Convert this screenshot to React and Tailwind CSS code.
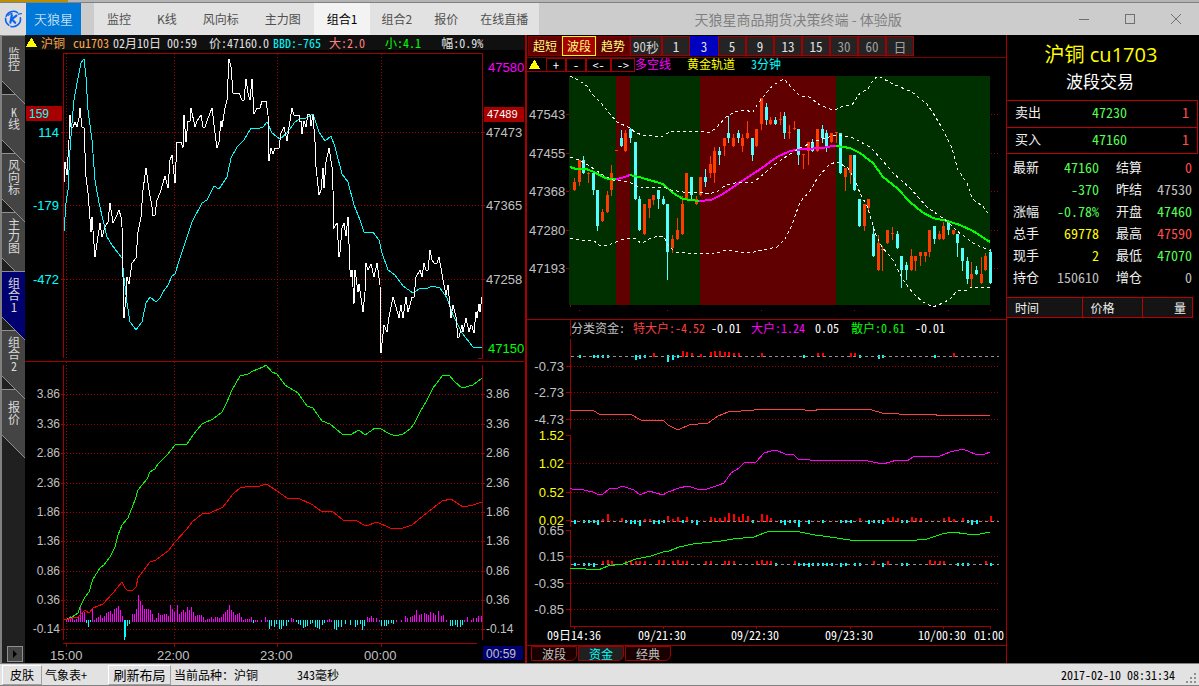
import React, { useState } from "react";
import clsx from "clsx";

const SONG = "font-['Noto_Sans_Mono_CJK_SC','Noto_Sans_CJK_SC',monospace]";
const RED = "#a00000";
const UP = "#ff3c00";
const DOWN = "#54ffff";

const MENU = ["监控", "K线", "风向标", "主力图", "组合1", "组合2", "报价", "在线直播"];

const SIDE_TABS = [
  { name: "监控", z: "z-[7]" },
  { name: "K线", z: "z-[6]" },
  { name: "风向标", z: "z-[5]" },
  { name: "主力图", z: "z-[4]" },
  { name: "组合1", z: "z-[8]" },
  { name: "组合2", z: "z-[2]" },
  { name: "报价", z: "z-[1]" },
];

const MODES = ["超短", "波段", "趋势"];
const PERIODS = ["1", "3", "5", "9", "13", "15", "30", "60", "日"];
const FUND_TABS = ["波段", "资金", "经典"];

// [label, value, colour, label, value, colour]
const QUOTE = [
  ["最新", "47160", "text-[#54ff54]", "结算", "0", "text-[#ff4c4c]"],
  ["", "-370", "text-[#54ff54]", "昨结", "47530", "text-[#c0c0c0]"],
  ["涨幅", "-0.78%", "text-[#54ff54]", "开盘", "47460", "text-[#54ff54]"],
  ["总手", "69778", "text-[#ffff00]", "最高", "47590", "text-[#ff4c4c]"],
  ["现手", "2", "text-[#ffff00]", "最低", "47070", "text-[#54ff54]"],
  ["持仓", "150610", "text-[#c0c0c0]", "增仓", "0", "text-[#c0c0c0]"],
];

// price against the session average
const PRICE =
  "64,182 65,162 67,175 69,140 70,115 71,127 73,127 75,122 77,127 79,118 80,108 82,127 84,128 86,177 88,193 91,232 92,217 95,257 97,243 100,223 102,237 105,227 108,222 110,203 113,223 116,217 119,210 121,217 122,227 123,277 124,318 126,297 127,277 129,284 132,263 136,258 138,232 141,217 143,190 146,168 149,190 152,207 153,216 155,215 157,200 160,193 163,183 165,176 168,188 170,160 172,155 175,183 177,142 181,142 183,148 184,115 186,142 188,121 190,121 191,108 195,127 197,121 201,115 203,127 205,127 207,121 212,108 215,133 217,148 219,142 221,121 222,127 225,108 227,100 229,59 231,67 233,93 239,93 242,100 244,100 246,79 248,93 250,100 252,79 254,114 257,108 260,108 262,101 266,101 268,115 269,161 271,148 273,154 275,148 279,148 281,133 284,127 287,141 289,127 292,108 294,115 299,115 299,121 301,121 302,134 304,121 306,127 308,114 310,115 311,126 313,115 315,142 316,167 319,195 321,190 323,168 324,188 326,162 329,148 332,167 333,190 334,228 337,223 339,257 340,252 342,228 344,223 346,236 348,217 350,270 351,277 352,270 354,304 355,270 358,292 359,284 363,312 365,292 366,263 368,270 371,264 374,277 377,263 380,285 381,353 384,325 387,332 389,317 393,297 396,307 399,318 401,305 403,318 406,297 408,312 410,305 412,297 414,297 416,277 420,270 422,277 424,263 426,270 428,270 430,250 432,260 434,263 437,263 439,257 441,268 443,280 446,295 448,285 451,318 453,305 456,317 458,338 459,337 462,325 463,332 466,318 469,332 471,325 472,326 474,333 476,312 477,318 479,304 480,312 482,297";
const BBD =
  "64,231 66,203 68,190 70,150 72,123 74,100 77,83 81,63 84,59 86,77 88,110 92,140 95,180 99,203 103,220 107,237 112,245 118,253 122,258 124,278 127,303 130,322 136,330 142,322 146,303 150,297 156,302 160,298 163,292 168,285 172,276 175,274 180,258 185,243 192,222 202,203 207,200 214,186 219,189 223,183 227,177 231,158 237,147 244,140 251,128 257,129 263,127 267,122 272,133 280,139 287,133 295,122 300,119 306,118 313,114 319,132 325,141 331,136 335,147 342,174 348,182 354,205 360,220 364,232 373,232 379,240 382,253 388,270 395,275 403,286 413,293 419,289 428,288 432,286 440,288 447,298 453,315 462,333 473,347 482,348";
const BIG =
  "64,620 72,617 78,613 80,607 85,597 89,592 93,579 100,568 104,565 110,557 115,547 118,535 122,525 128,518 135,500 138,490 147,479 150,472 155,469 158,464 167,455 175,445 187,444 193,435 202,424 213,419 222,412 227,402 232,390 240,376 248,374 253,371 263,367 266,365 272,372 277,374 285,385 298,393 307,406 313,408 322,421 330,424 342,434 350,435 359,430 365,435 375,428 381,429 388,433 395,436 403,434 410,429 414,424 420,412 427,400 433,388 443,375 449,375 455,382 462,388 473,385 482,378";
const SMALL =
  "64,620 72,618 78,617 85,610 89,613 93,608 103,604 113,593 122,582 125,588 128,591 133,590 136,587 138,578 150,562 156,560 168,551 175,542 187,529 192,522 202,514 210,513 223,507 233,494 240,488 250,486 260,486 266,484 268,485 277,491 287,498 298,498 313,505 322,512 332,511 343,520 355,520 366,526 377,522 390,528 403,528 412,525 423,516 442,501 451,499 463,507 473,505 482,502";

const FLOW_BARS =
  "66,2 68,3 70,5 72,3 74,1 76,2 78,4 80,14 82,8 84,9 86,-2 88,-6 90,-1 92,12 94,1 96,3 98,4 100,6 102,3 104,5 106,8 108,9 110,10 112,7 114,12 116,13 118,15 120,11 122,5 124,-19 125,-16 127,-5 129,-3 132,7 134,7 136,12 138,26 140,20 142,16 144,12 146,12 148,12 150,11 152,7 154,1 156,3 158,8 160,6 162,6 164,7 166,7 168,5 170,16 172,12 174,9 177,16 179,7 181,9 183,11 185,9 187,14 189,11 191,14 193,9 195,5 197,6 199,6 201,6 203,4 205,1 207,2 209,2 211,4 213,2 215,4 217,4 219,3 221,4 223,7 225,9 227,11 229,16 231,11 233,9 235,6 237,7 239,8 241,4 243,1 245,2 247,2 249,2 251,4 253,-2 255,1 257,1 261,1 265,4 267,1 269,-8 271,-5 274,-6 276,-3 279,-8 281,-8 283,-5 286,-5 288,-1 291,3 293,2 296,-1 298,-3 300,-4 303,-7 305,-6 307,-5 310,-3 312,-2 315,-6 317,-7 319,-8 322,-4 324,-2 327,1 329,2 331,1 334,-8 336,-9 338,-6 341,-6 345,-3 350,-4 355,-6 357,-4 360,-3 362,-9 364,-5 367,4 369,3 371,5 373,3 376,3 379,1 381,-5 384,-5 386,-5 388,-3 391,-2 393,-3 396,1 401,1 405,5 407,3 410,4 412,5 414,6 416,11 419,6 421,7 424,8 426,7 428,6 430,9 433,8 435,6 438,10 441,5 443,6 446,1 450,-5 452,-5 455,-4 457,-6 460,-6 462,-4 464,1 467,4 471,1 473,3 476,3 478,5 481,5";

// Bollinger style channel of the K line chart
const BAND_TOP =
  "570,76 576,79 583,83 588,87 591,93 601,103 609,113 617,122 630,128 636,133 643,135 652,136 663,136 671,131 699,131 709,133 716,128 726,117 734,112 744,110 753,112 759,102 773,85 784,79 792,88 800,96 809,97 820,105 830,109 837,109 843,106 852,105 860,93 868,89 873,80 878,76 893,84 912,92 927,104 935,116 942,128 952,148 958,170 967,183 972,198 977,203 982,205 988,213";
const BAND_MID =
  "570,157 579,160 588,165 594,169 603,175 613,180 629,182 641,188 653,187 663,187 671,190 683,192 701,192 709,194 718,191 726,185 739,182 753,182 759,178 766,172 777,163 790,154 800,148 813,142 825,138 837,135 853,138 870,147 882,160 893,173 910,188 927,207 947,221 957,231 973,243 990,251";
const BAND_LOW =
  "570,238 581,240 593,240 599,245 606,246 621,240 634,238 641,243 644,242 651,238 659,236 664,237 669,247 676,252 686,253 714,254 726,250 749,253 763,250 777,247 785,239 792,225 800,202 810,191 818,177 830,164 837,162 848,168 855,180 860,193 868,208 875,233 882,247 893,260 903,280 913,293 923,302 933,307 943,303 950,299 957,291 967,290 972,287 990,288";

const TREND = [
  ["#00ff00", "570,167 576,169 586,169 594,172 603,177 609,179 616,179"],
  ["#ff00ff", "616,179 622,178 630,175"],
  ["#00ff00", "630,175 639,177 663,184 673,193 683,199 699,201"],
  ["#ff00ff", "699,201 711,200 723,194 739,183 759,170 777,157 790,151 803,149 823,148 832,146 836,146"],
  ["#00ff00", "836,146 850,148 860,153 873,163 883,177 897,188 910,202 922,212 933,218 947,221 960,225 973,231 990,242"],
];

// x, high, low, body top, body bottom, 1 = rising
const CANDLES = [
  [574, 178, 191, 182, 190, 1], [579, 160, 186, 160, 182, 1], [583, 156, 174, 160, 173, 0],
  [588, 172, 183, 173, 174, 1], [593, 173, 195, 173, 190, 0], [597, 190, 231, 190, 226, 0],
  [602, 209, 222, 212, 221, 1], [607, 191, 213, 195, 212, 1], [611, 165, 196, 173, 190, 1],
  [616, 150, 151, 150, 151, 1], [621, 130, 147, 138, 146, 0], [625, 130, 152, 133, 151, 1],
  [630, 128, 143, 129, 138, 0], [635, 142, 200, 142, 199, 0], [639, 196, 231, 199, 230, 0],
  [644, 204, 235, 204, 234, 1], [649, 199, 218, 199, 208, 1], [653, 195, 205, 195, 200, 1],
  [658, 190, 209, 190, 199, 0], [663, 196, 205, 199, 204, 0], [667, 204, 280, 204, 252, 0],
  [672, 235, 253, 239, 248, 1], [677, 218, 240, 230, 239, 1], [682, 196, 235, 204, 234, 1],
  [686, 173, 200, 173, 199, 1], [691, 177, 200, 177, 195, 0], [696, 196, 205, 199, 204, 1],
  [700, 177, 196, 177, 195, 1], [705, 169, 187, 177, 182, 0], [710, 156, 178, 164, 173, 1],
  [714, 147, 183, 151, 173, 1], [719, 147, 165, 151, 155, 0], [724, 138, 156, 138, 146, 1],
  [728, 116, 143, 133, 138, 0], [733, 134, 147, 138, 146, 1], [738, 130, 143, 133, 138, 0],
  [742, 134, 152, 138, 146, 1], [747, 121, 139, 133, 138, 1], [752, 138, 161, 138, 155, 0],
  [756, 129, 147, 129, 146, 1], [761, 98, 130, 98, 124, 1], [766, 103, 125, 107, 120, 0],
  [770, 117, 125, 120, 124, 1], [775, 117, 125, 120, 124, 0], [780, 112, 125, 119, 120, 1],
  [784, 112, 139, 116, 133, 0], [789, 125, 139, 132, 133, 1], [794, 121, 130, 128, 129, 1],
  [798, 129, 165, 129, 155, 0], [803, 154, 169, 154, 155, 1], [808, 142, 165, 142, 151, 1],
  [812, 139, 152, 142, 151, 0], [817, 129, 152, 129, 151, 1], [822, 125, 143, 129, 138, 0],
  [826, 130, 152, 133, 146, 0], [831, 133, 143, 133, 142, 1], [836, 132, 143, 132, 133, 1],
  [840, 133, 174, 133, 173, 0], [845, 168, 191, 168, 177, 1], [850, 155, 184, 155, 173, 1],
  [854, 155, 191, 155, 190, 0], [859, 199, 227, 199, 226, 0], [864, 204, 231, 204, 226, 1],
  [868, 199, 213, 199, 208, 1], [873, 226, 257, 234, 256, 0], [878, 235, 271, 243, 270, 1],
  [882, 246, 271, 249, 250, 1], [887, 230, 244, 230, 243, 1], [892, 227, 240, 233, 234, 1],
  [897, 231, 249, 234, 248, 0], [901, 256, 288, 256, 270, 0], [906, 262, 280, 265, 270, 0],
  [911, 249, 271, 256, 270, 1], [915, 256, 271, 256, 261, 1], [920, 252, 266, 252, 256, 1],
  [925, 252, 262, 252, 256, 1], [929, 230, 257, 230, 252, 1], [934, 226, 244, 226, 239, 0],
  [939, 231, 240, 234, 239, 1], [943, 222, 240, 226, 239, 1], [948, 221, 235, 222, 230, 0],
  [953, 230, 235, 230, 234, 1], [957, 234, 257, 234, 243, 0], [962, 248, 271, 248, 261, 0],
  [967, 257, 284, 261, 279, 0], [971, 262, 288, 274, 279, 1], [976, 266, 275, 270, 274, 0],
  [981, 257, 284, 274, 283, 1], [985, 253, 271, 256, 270, 1], [990, 249, 284, 252, 283, 0],
];

const FUND_RED =
  "570,410 594,411 599,414 630,414 641,420 663,420 668,425 678,430 689,425 708,423 718,416 728,412 754,410 771,409 797,409 813,411 820,409 850,409 872,410 882,413 915,415 930,414 943,416 973,415 990,416";
const FUND_MAGENTA =
  "570,488 574,490 579,489 593,492 599,495 603,494 609,489 618,488 622,486 634,490 640,495 649,491 663,495 668,492 679,488 688,486 697,489 707,489 719,485 724,483 731,473 739,468 744,463 748,462 756,462 764,453 771,451 776,450 785,454 794,455 798,459 810,460 837,460 850,461 863,460 883,464 897,460 907,461 913,457 940,456 950,452 963,449 975,454 985,454 990,452";
const FUND_GREEN =
  "570,568 586,569 598,570 608,566 623,564 636,559 651,556 663,552 669,551 679,547 693,544 721,541 733,539 754,537 764,533 770,531 795,531 815,535 830,537 850,540 867,540 917,540 927,539 942,534 952,532 967,534 980,534 990,532";

const FUND_BARS = [
  [356, "579,-2 593,-2 597,-2 602,-2 607,-2 635,-4 639,-3 644,-2 653,3 667,-6 672,-4 677,-2 682,5 686,4 691,3 700,2 710,4 714,5 719,5 724,4 728,4 733,3 738,3 761,3 803,-2 817,3 822,3 850,3 854,3 859,-2 878,-3 882,-2 934,-2 953,3"],
  [521, "574,-3 583,-2 588,-2 593,-2 597,-4 602,2 607,7 621,3 625,-2 630,-3 634,-3 639,-5 644,2 649,2 653,-3 658,-3 663,-2 667,5 672,2 677,4 682,-2 686,4 691,-2 696,-4 710,4 714,3 719,3 724,4 728,8 733,7 738,4 742,7 747,5 752,-2 761,7 766,6 770,3 780,-2 784,-4 789,-2 794,-2 798,-6 808,-3 822,-2 840,-2 845,-2 850,-2 859,3 868,-3 873,-2 878,-2 882,-3 887,3 892,4 897,3 901,-2 906,-2 911,4 915,3 920,3 943,3 948,4 953,2 962,3 967,-2 971,-4 976,-3 990,5"],
  [564, "574,-2 583,-2 588,-2 593,-3 602,3 607,4 611,3 625,3 630,4 635,3 639,3 644,3 658,4 663,4 672,3 677,4 682,3 686,3 705,3 710,3 724,3 728,3 733,3 756,3 761,4 766,3 770,3 775,-2 794,3 798,-2 803,-2 808,-3 812,-2 817,-2 822,-2 826,-2 831,-2 840,-3 845,-2 854,-2 859,-2 873,3 882,-3 887,3 901,-2 906,-2 929,4 934,3 939,3 943,3 957,-2 962,-2 967,-2 985,3 990,-2"],
];

const FUND_SCALE = [
  ["-0.73", 366, "#c0c0c0"], ["-2.73", 392, "#c0c0c0"], ["-4.73", 419, "#c0c0c0"],
  ["1.52", 435, "#ffff00"], ["1.02", 463, "#ffff00"], ["0.52", 492, "#ffff00"], ["0.02", 520, "#ffff00"],
  ["0.65", 530, "#c0c0c0"], ["0.15", 556, "#c0c0c0"], ["-0.35", 583, "#c0c0c0"], ["-0.85", 609, "#c0c0c0"],
];

const FUND_TIMES = [
  ["09日14:36", 547], ["09/21:30", 638], ["09/22:30", 731], ["09/23:30", 825], ["10/00:30", 918], ["01:00", 974],
];

const pairs = (text) => text.split(" ").map((p) => p.split(",").map(Number));

function Label({ x, y, fill = "#c0c0c0", anchor = "start", className = "text-[13px]", children }) {
  return (
    <text x={x} y={y} dy="0.36em" fill={fill} textAnchor={anchor} className={className}>
      {children}
    </text>
  );
}

function Line({ points, stroke, width = 1, dash }) {
  return <polyline points={points} fill="none" stroke={stroke} strokeWidth={width} strokeDasharray={dash} />;
}

function Bars({ base, data, up, down, width }) {
  return pairs(data).map(([x, h]) => (
    <rect
      key={x}
      x={x}
      y={h > 0 ? base - h : base - 1}
      width={width}
      height={Math.abs(h) + 1}
      fill={h > 0 ? up : down}
    />
  ));
}

function Logo() {
  return (
    <svg viewBox="0 0 20 20" className="h-5 w-5" fill="none" stroke="#0a64f0" strokeLinecap="round">
      <path d="M14.5 3.6A7.6 7.6 0 0 0 3.2 7.2" strokeWidth="1.6" />
      <path d="M2.6 9.4a7.6 7.6 0 0 0 3.2 6.8" strokeWidth="1.6" />
      <path d="M8 17.4a7.6 7.6 0 0 0 9.4-8.6" strokeWidth="1.6" />
      <path d="M15.2 5.2l3.2-.6M5.2 6.4A5.6 5.6 0 0 1 9 4.4" strokeWidth="1.2" />
      <path d="M8.8 6.2 7.4 13.6M13.4 6.6l-4.6 3.6 3.4 3.6" strokeWidth="2.2" />
    </svg>
  );
}

function TitleBar() {
  const [active, setActive] = useState("组合1");
  return (
    <header className="flex h-[35px] shrink-0 flex-col bg-[#cccccc]">
      <div className="flex h-[3px] border-b border-[#808080] bg-[#b4b4b4]">
        <div className="w-17 bg-[#b89000]" />
      </div>
      <div className="flex flex-1 items-stretch">
        <div className="flex w-[26px] items-center justify-center bg-[#dcdcdc]">
          <Logo />
        </div>
        <h1 className="flex w-[55px] items-center justify-center bg-[#0078d7] text-[13px] font-light text-white">
          天狼星
        </h1>
        <nav className="ml-[13px] flex bg-[#e2e2e2]">
          {MENU.map((name, i) => (
            <button
              key={name}
              type="button"
              onClick={() => setActive(name)}
              className={clsx(
                "text-xs",
                i < 5 ? "px-[13px]" : "px-[11px]",
                active === name ? "bg-[#f3f3f3] text-black" : "text-[#505050]"
              )}
            >
              {name}
            </button>
          ))}
        </nav>
        <p className="flex flex-1 items-center justify-center pr-1 text-sm text-[#808080]">
          天狼星商品期货决策终端 - 体验版
        </p>
        <div className="flex text-[#707070]">
          <button type="button" aria-label="最小化" className="flex w-[46px] items-center justify-center">
            <svg viewBox="0 0 10 10" className="h-2.5 w-2.5" stroke="currentColor" shapeRendering="crispEdges">
              <path d="M0 5.5h10" />
            </svg>
          </button>
          <button type="button" aria-label="最大化" className="flex w-[46px] items-center justify-center">
            <svg viewBox="0 0 10 10" className="h-2.5 w-2.5" fill="none" stroke="currentColor" shapeRendering="crispEdges">
              <path d="M.5.5h9v9h-9z" />
            </svg>
          </button>
          <button type="button" aria-label="关闭" className="flex w-[46px] items-center justify-center">
            <svg viewBox="0 0 10 10" className="h-2.5 w-2.5" stroke="currentColor">
              <path d="M0 0l10 10M10 0L0 10" />
            </svg>
          </button>
        </div>
      </div>
    </header>
  );
}

function SideBar() {
  const [active, setActive] = useState("组合1");
  return (
    <nav className="relative flex flex-col border-l-2 border-[#808080] bg-[#202020]">
      {SIDE_TABS.map(({ name, z }) => (
        <button
          key={name}
          type="button"
          onClick={() => setActive(name)}
          className={clsx("relative flex h-[59px] w-full shrink-0 items-center justify-center pb-3 text-xs text-[#d8d8d8]", SONG, z)}
        >
          <svg viewBox="0 0 23 70" className="absolute top-0 left-0 h-[70px] w-full" shapeRendering="crispEdges">
            <path d="M0 .5H23V69L0 46z" fill={active === name ? "#000070" : "#444444"} />
            <path d="M0 .5H23M0 46L23 69" fill="none" stroke="#909090" />
          </svg>
          <span className="relative [text-orientation:upright] [writing-mode:vertical-rl]">{name}</span>
        </button>
      ))}
      <button
        type="button"
        aria-label="展开"
        className="mt-auto mb-px ml-[5px] flex h-4 w-4 items-center justify-center border border-[#909090] bg-[#444444]"
      >
        <svg viewBox="0 0 4 8" className="h-2 w-1">
          <path d="M0 0l4 4-4 4z" fill="#000" />
        </svg>
      </button>
    </nav>
  );
}

function Triangle() {
  return (
    <svg viewBox="0 0 11 9" className="h-[9px] w-[11px]" shapeRendering="crispEdges">
      <path d="M5 0h1l5 9H0z" fill="#ffff00" />
    </svg>
  );
}

function IntradayChart() {
  const hours = [66, 174, 277, 381];
  const upper = [132, 205, 279];
  const lower = [394, 424, 453, 483, 512, 541, 571, 600, 629];
  const lowerText = ["3.86", "3.36", "2.86", "2.36", "1.86", "1.36", "0.86", "0.36", "-0.14"];

  return (
    <svg viewBox="25 50 500 613" className="min-h-0 w-full flex-1 font-['Liberation_Sans',sans-serif]">
      <g shapeRendering="crispEdges">
        {/* grid */}
        <g stroke={RED} strokeDasharray="1 2">
          {hours.map((x) => (
            <path key={x} d={`M${x + 0.5} 54V358M${x + 0.5} 362V640`} />
          ))}
          {[...upper, ...lower].map((y) => (
            <path key={y} d={`M64 ${y + 0.5}H482`} />
          ))}
        </g>
        {/* axes and ticks */}
        <g stroke={RED} fill="none">
          <path d="M63.5 358V53.5H482.5V358.5H478M63.5 365V640M482.5 365V640M63 643.5H477M25 361.5H524" />
          {[...upper, ...lower].map((y) => (
            <path key={y} d={`M61 ${y + 0.5}H65M481 ${y + 0.5}H485`} />
          ))}
          {hours.map((x) => (
            <path key={x} d={`M${x + 0.5} 643V647`} />
          ))}
        </g>

        <Line points={BBD} stroke="#00ffff" />
        <Line points={PRICE} stroke="#ffffff" />
        <Bars base={621} data={FLOW_BARS} up="#ff00ff" down="#00ffff" width={1} />
        <Line points={BIG} stroke="#00ff00" />
        <Line points={SMALL} stroke="#ff0000" />

        <rect x="26" y="106" width="36" height="15" fill="#a80000" />
        <rect x="484" y="107" width="40" height="15" fill="#a80000" />
        <rect x="483" y="646" width="40" height="14" fill="#000070" />
      </g>

      <Label x={29} y={114} fill="#00ffff" className="text-xs">159</Label>
      <Label x={59} y={132} fill="#00ffff" anchor="end">114</Label>
      <Label x={59} y={205} fill="#00ffff" anchor="end">-179</Label>
      <Label x={59} y={279} fill="#00ffff" anchor="end">-472</Label>
      <Label x={488} y={67} fill="#ff00ff">47580</Label>
      <Label x={487} y={114} fill="#ffffff" className="text-[11px]">47489</Label>
      <Label x={486} y={132}>47473</Label>
      <Label x={486} y={205}>47365</Label>
      <Label x={486} y={279}>47258</Label>
      <Label x={488} y={348} fill="#00ff00">47150</Label>
      {lower.map((y, i) => (
        <React.Fragment key={y}>
          <Label x={60} y={y} anchor="end" className="text-xs">{lowerText[i]}</Label>
          <Label x={486} y={y} className="text-xs">{lowerText[i]}</Label>
        </React.Fragment>
      ))}
      <Label x={50} y={655}>15:00</Label>
      <Label x={157} y={655}>22:00</Label>
      <Label x={260} y={655}>23:00</Label>
      <Label x={364} y={655}>00:00</Label>
      <Label x={486} y={654} className="text-xs">00:59</Label>
    </svg>
  );
}

function IntradayPanel() {
  return (
    <section className="flex min-h-0 min-w-0 flex-col border-r-2 border-[#a80000]">
      <div className={clsx("flex h-[15px] shrink-0 items-center overflow-hidden bg-[#101010] pl-px text-xs whitespace-nowrap text-[#e0e0e0]", SONG)}>
        <Triangle />
        <span className="ml-1 text-[#ffa84c]">沪铜</span>
        <span className="ml-2 text-[#ffa84c]">cu1703</span>
        <span className="ml-1">02月10日</span>
        <span className="ml-1.5">00:59</span>
        <span className="ml-3">价:47160.0</span>
        <span className="ml-1 text-[#00ffff]">BBD:-765</span>
        <span className="ml-2 text-[#ff8080]">大:2.0</span>
        <span className="ml-5 text-[#00ff00]">小:4.1</span>
        <span className="ml-5">幅:0.9%</span>
      </div>
      <IntradayChart />
    </section>
  );
}

function KLineChart() {
  const scale = [["47543", 114], ["47455", 153], ["47368", 191], ["47280", 230], ["47193", 268]];
  return (
    <svg viewBox="527 72 479 247" className="min-h-0 w-full flex-[247] font-['Liberation_Sans',sans-serif]">
      <g shapeRendering="crispEdges">
        <path d="M569 76H616V305H569zM630 76H700V305H630zM836 76H990V305H836z" fill="#003000" />
        <path d="M616 76H630V305H616zM700 76H836V305H700z" fill="#600000" />
        {scale.map(([, y]) => (
          <path key={y} d={`M566 ${y + 0.5}h3M991 ${y + 0.5}h1m2 0h1m2 0h1`} stroke={RED} />
        ))}
        <path d="M570.5 305v2M579 310.5h1M667 310.5h1M761 310.5h1M854 310.5h1M948 310.5h1M990 310.5h1" stroke={RED} />

        {CANDLES.map(([x, high, low, top, bottom, rising]) => (
          <g key={x} fill={rising ? UP : DOWN}>
            <rect x={x} y={high} width="1" height={low - high} />
            <rect x={x - 1} y={top} width="3" height={bottom - top} />
          </g>
        ))}
        {TREND.map(([color, points]) => (
          <Line key={points} points={points} stroke={color} width={2} />
        ))}
        <Line points={BAND_TOP} stroke="#ffffff" dash="3 3" />
        <Line points={BAND_MID} stroke="#ffffff" dash="3 3" />
        <Line points={BAND_LOW} stroke="#ffffff" dash="3 3" />
      </g>
      {scale.map(([text, y]) => (
        <Label key={text} x={529} y={y}>{text}</Label>
      ))}
    </svg>
  );
}

function FundChart() {
  return (
    <svg viewBox="527 335 479 310" className="min-h-0 w-full flex-[310] font-['Liberation_Sans',sans-serif]">
      <g shapeRendering="crispEdges">
        <g stroke={RED}>
          {FUND_SCALE.filter(([t]) => t !== "1.52" && t !== "0.65").map(([t, y]) => (
            <path key={t} d={`M571 ${y + 0.5}H998`} strokeDasharray="1 2" />
          ))}
          {FUND_SCALE.map(([t, y]) => (
            <path key={t} d={`M566 ${y + 0.5}h5`} />
          ))}
          <path d="M570.5 339V429M570.5 435V527M570.5 530V626.5H990M574.5 626v3M663.5 626v3M756.5 626v3M850.5 626v3M943.5 626v3M990.5 626v3" fill="none" />
        </g>
        {FUND_BARS.map(([base, data]) => (
          <g key={base}>
            <Bars base={base} data={data} up="#ff0000" down="#00ffff" width={2} />
            <path d={`M571 ${base + 0.5}H999`} stroke="#909090" strokeDasharray="3 3" />
          </g>
        ))}
        <Line points={FUND_RED} stroke="#ff4040" />
        <Line points={FUND_MAGENTA} stroke="#ff00ff" />
        <Line points={FUND_GREEN} stroke="#00ff00" />
      </g>
      {FUND_SCALE.map(([text, y, fill]) => (
        <Label key={text} x={564} y={y} fill={fill} anchor="end">{text}</Label>
      ))}
      {FUND_TIMES.map(([text, x]) => (
        <Label key={text} x={x} y={636} fill="#ffffff" className={clsx("text-xs", SONG)}>{text}</Label>
      ))}
    </svg>
  );
}

function KLinePanel() {
  const [mode, setMode] = useState("波段");
  const [period, setPeriod] = useState("3");
  const [fund, setFund] = useState("资金");

  return (
    <section className={clsx("flex min-h-0 min-w-0 flex-col border-r border-[#a80000]", SONG)}>
      <div className="flex h-[23px] shrink-0 border-b border-[#800000] py-px pl-px text-[13px]">
        {MODES.map((name) => (
          <button
            key={name}
            type="button"
            onClick={() => setMode(name)}
            className={clsx(
              "w-[34px] border text-xs text-[#ffff80]",
              mode === name ? "border-[#ffff00] bg-[#a80000]" : "border-[#800000] bg-[#600000]"
            )}
          >
            {name}
          </button>
        ))}
        <button type="button" onClick={() => setPeriod("90秒")} className="w-8 border border-[#a00000] bg-[#242424] text-[#d0d0d0]">
          90秒
        </button>
        {PERIODS.map((name, i) => (
          <button
            key={name}
            type="button"
            onClick={() => setPeriod(name)}
            className={clsx(
              "w-7 border",
              period === name ? "border-[#0000c0] bg-[#0000c0]" : "border-[#a00000] bg-[#242424]",
              i > 5 ? "text-[#a0a0a0]" : "text-[#e0e0e0]"
            )}
          >
            {name}
          </button>
        ))}
      </div>
      <div className="flex h-[14px] shrink-0 items-stretch text-xs leading-3 whitespace-nowrap">
        <div className="flex w-[19px] items-center border-b border-[#a00000] pl-0.5">
          <Triangle />
        </div>
        <button type="button" className="w-5 border border-[#a00000] text-white">+</button>
        <button type="button" className="w-5 border border-[#a00000] text-white">-</button>
        <button type="button" className="w-[25px] border border-[#a00000] text-white">&lt;-</button>
        <button type="button" className="w-6 border border-[#a00000] text-white">-&gt;</button>
        <span className="text-[#ff00ff]">多空线</span>
        <span className="ml-4 text-[#ffff00]">黄金轨道</span>
        <span className="ml-4 text-[#00ffff]">3分钟</span>
      </div>
      <KLineChart />
      <div className="flex h-4 shrink-0 items-center border-t border-[#a00000] pl-[43px] text-xs whitespace-nowrap text-white">
        <span className="border-l border-[#a00000] text-[#c0c0c0]">分类资金:</span>
        <span className="ml-2 text-[#ff4040]">特大户:-4.52</span>
        <span className="ml-1.5">-0.01</span>
        <span className="ml-2.5 text-[#ff00ff]">大户:1.24</span>
        <span className="ml-2.5">0.05</span>
        <span className="ml-3 text-[#00ff00]">散户:0.61</span>
        <span className="ml-2.5">-0.01</span>
      </div>
      <FundChart />
      <div className="flex h-[18px] shrink-0 gap-px border-t border-[#a00000] pb-0.5 pl-1 text-xs leading-3">
        {FUND_TABS.map((name) => (
          <button
            key={name}
            type="button"
            onClick={() => setFund(name)}
            className={clsx(
              "w-[46px] rounded-br-md border border-[#a00000]",
              fund === name ? "bg-[#202020] text-[#00ffff]" : "bg-[#180000] text-[#c0c0c0]"
            )}
          >
            {name}
          </button>
        ))}
      </div>
    </section>
  );
}

function QuotePanel() {
  return (
    <aside className={clsx("flex min-h-0 flex-col overflow-hidden text-[13px] text-[#f0f0f0]", SONG)}>
      <h2 className="pt-2 pr-1 text-center font-['Open_Sans','Noto_Sans_CJK_SC',sans-serif] text-xl leading-6 text-[#ffff00]">
        沪铜 cu1703
      </h2>
      <p className="mb-[5px] pr-1.5 text-center font-['Noto_Sans_CJK_SC',sans-serif] text-[17px] leading-7 text-white">波段交易</p>
      <div className="mr-px flex h-7 items-center border border-l-0 border-[#c00000] pr-2 pb-1 pl-2">
        <span>卖出</span>
        <span className="flex-1 pr-1 text-center text-sm text-[#54ff54]">47230</span>
        <span className="text-sm text-[#ff4c4c]">1</span>
      </div>
      <div className="mr-px flex h-[26px] items-center border-r border-b border-[#c00000] pr-2 pb-1 pl-2">
        <span>买入</span>
        <span className="flex-1 pr-1 text-center text-sm text-[#54ff54]">47160</span>
        <span className="text-sm text-[#ff4c4c]">1</span>
      </div>
      <table className="mt-0.5 w-full leading-[22px]">
        <tbody>
          {QUOTE.map(([label, value, color, label2, value2, color2]) => (
            <tr key={label2} className="h-[22px]">
              <td className="w-8 pl-1.5">{label}</td>
              <td className={clsx("w-[60px] text-right text-sm leading-[22px]", color)}>{value}</td>
              <td className="pl-[17px]">{label2}</td>
              <td className={clsx("pr-[7px] text-right text-sm leading-[22px]", color2)}>{value2}</td>
            </tr>
          ))}
        </tbody>
      </table>
      <table className="mt-[9px] mr-1.5 border-y border-[#c00000] bg-[#141414] text-xs">
        <thead>
          <tr className="h-5">
            <th className="w-[75px] border-r border-[#c00000] pl-2 text-left font-normal">时间</th>
            <th className="border-r border-[#c00000] pl-2 text-left font-normal">价格</th>
            <th className="w-[50px] border-r border-[#c00000] pr-1.5 text-right font-normal">量</th>
          </tr>
        </thead>
      </table>
    </aside>
  );
}

function StatusBar() {
  return (
    <footer className={clsx("flex h-[23px] shrink-0 items-center border-y border-[#808080] bg-[#e2e2e2] pl-0.5 text-xs whitespace-nowrap text-black", SONG)}>
      <button type="button" className="h-5 w-10 border border-[#a0a0a0] border-t-white border-l-white">皮肤</button>
      <span className="w-[66px] pl-[3px]">气象表+</span>
      <button type="button" className="h-5 w-[63px] border border-[#a0a0a0] border-t-white border-l-white text-[13px]">刷新布局</button>
      <span className="w-[126px] pl-[3px]">当前品种：沪铜</span>
      <span>343毫秒</span>
      <span className="mr-2.5 ml-auto">2017-02-10 08:31:34</span>
      <svg viewBox="0 0 12 12" className="mt-1.5 mr-0.5 h-3 w-3" fill="#909090">
        <path d="M9 1h2v2H9zM5 5h2v2H5zM9 5h2v2H9zM1 9h2v2H1zM5 9h2v2H5zM9 9h2v2H9z" />
      </svg>
    </footer>
  );
}

function App() {
  return (
    <div className="flex h-screen flex-col overflow-hidden bg-black font-['Noto_Sans_CJK_SC',sans-serif]">
      <TitleBar />
      <main className="grid min-h-0 flex-1 grid-cols-[25px_minmax(0,502fr)_minmax(0,480fr)_192px] grid-rows-[minmax(0,1fr)]">
        <SideBar />
        <IntradayPanel />
        <KLinePanel />
        <QuotePanel />
      </main>
      <StatusBar />
    </div>
  );
}

export default App;
